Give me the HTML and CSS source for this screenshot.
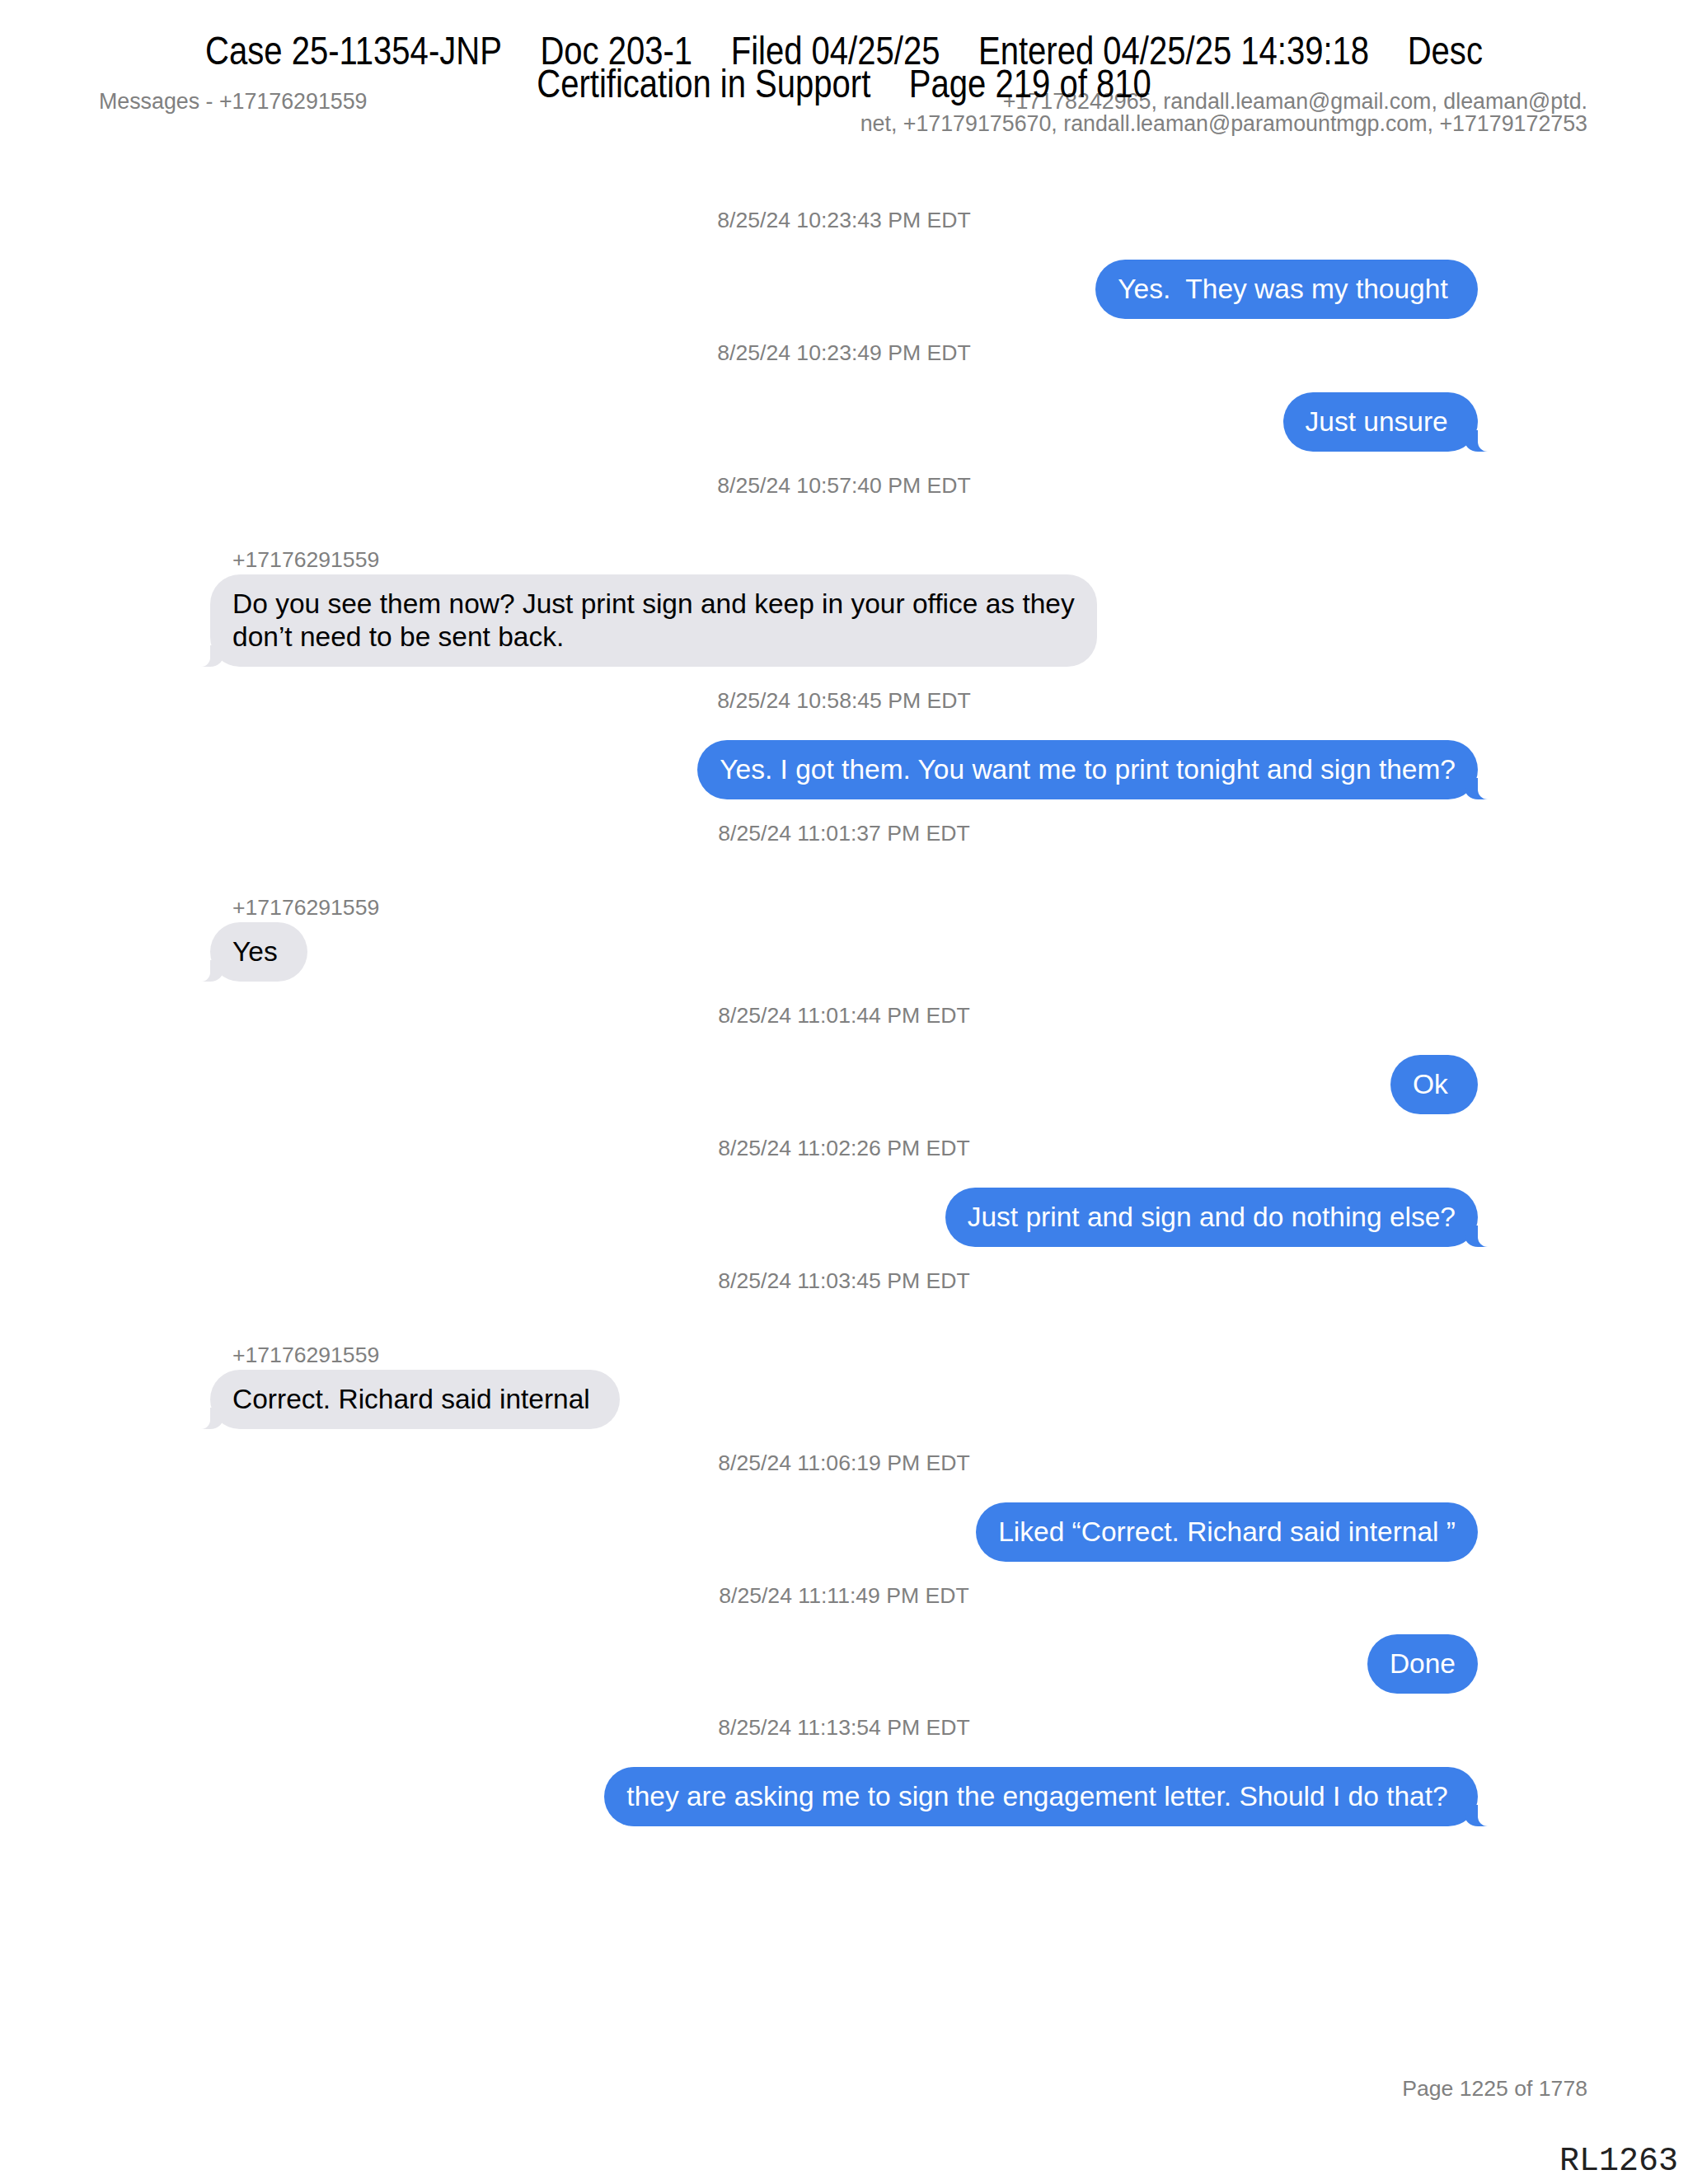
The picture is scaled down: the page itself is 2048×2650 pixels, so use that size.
FILE: index.html
```html
<!DOCTYPE html>
<html lang="en">
<head>
    <meta charset="UTF-8">
    <meta name="viewport" content="width=device-width, initial-scale=1.0">
    <title>Messages - +17176291559</title>
    <link rel="stylesheet" href="styles.css">
</head>
<body>
<div class="page">

    <!-- court filing stamp printed over the export -->
    <div class="stamp">
        <div class="stamp-line"><span>Case 25-11354-JNP</span><span>Doc 203-1</span><span>Filed 04/25/25</span><span>Entered 04/25/25 14:39:18</span><span>Desc</span></div>
        <div class="stamp-line"><span>Certification in Support</span><span>Page 219 of 810</span></div>
    </div>

    <header class="export-head">
        <div class="title">Messages - +17176291559</div>
        <div class="recipients">+17178242965, randall.leaman@gmail.com, dleaman@ptd.<br>net, +17179175670, randall.leaman@paramountmgp.com, +17179172753</div>
    </header>

    <main class="thread">
        <div class="time">8/25/24 10:23:43 PM EDT</div>
        <div class="msg sent">Yes.  They was my thought </div>

        <div class="time">8/25/24 10:23:49 PM EDT</div>
        <div class="msg sent tail">Just unsure </div>

        <div class="time">8/25/24 10:57:40 PM EDT</div>
        <div class="sender">+17176291559</div>
        <div class="msg received tail">Do you see them now? Just print sign and keep in your office as they<br>don’t need to be sent back.</div>

        <div class="time">8/25/24 10:58:45 PM EDT</div>
        <div class="msg sent tail">Yes. I got them. You want me to print tonight and sign them?</div>

        <div class="time">8/25/24 11:01:37 PM EDT</div>
        <div class="sender">+17176291559</div>
        <div class="msg received tail">Yes </div>

        <div class="time">8/25/24 11:01:44 PM EDT</div>
        <div class="msg sent">Ok </div>

        <div class="time">8/25/24 11:02:26 PM EDT</div>
        <div class="msg sent tail">Just print and sign and do nothing else?</div>

        <div class="time">8/25/24 11:03:45 PM EDT</div>
        <div class="sender">+17176291559</div>
        <div class="msg received tail">Correct. Richard said internal </div>

        <div class="time">8/25/24 11:06:19 PM EDT</div>
        <div class="msg sent">Liked “Correct. Richard said internal ”</div>

        <div class="time">8/25/24 11:11:49 PM EDT</div>
        <div class="msg sent">Done</div>

        <div class="time">8/25/24 11:13:54 PM EDT</div>
        <div class="msg sent tail">they are asking me to sign the engagement letter. Should I do that? </div>
    </main>

    <footer class="foot">
        <div class="page-num">Page 1225 of 1778</div>
        <div class="bates">RL1263</div>
    </footer>

</div>
</body>
</html>
```

FILE: styles.css
```css
* {
    margin: 0;
    padding: 0;
    box-sizing: border-box;
}
body {
    background-color: #fff;
    font-family: "Liberation Sans", Arial, sans-serif;
}
.page {
    position: relative;
    min-height: 2650px;
    display: flex;
    flex-direction: column;
    padding: 110px 122px 7px 120px;
}

/* filing stamp sits on top of the page, narrow face */
.stamp {
    position: absolute;
    top: 41px;
    left: 0;
    right: 0;
    text-align: center;
    font-family: "Liberation Sans", Arial, sans-serif;
    font-size: 49px;
    line-height: 40px;
    color: #000;
    z-index: 2;
}
.stamp-line {
    transform: scaleX(0.817); /* no narrow font installed */
    white-space: nowrap;
}
.stamp-line span + span {
    margin-left: 57px;
}

.export-head {
    display: flex;
    justify-content: space-between;
    font-size: 26.8px;
    line-height: 27px;
    color: #808080;
}
.recipients {
    text-align: right;
}

.thread {
    display: flex;
    flex-direction: column;
    margin-top: 62px;
    padding: 0 133px 0 135px;
}
.time {
    align-self: center;
    font-size: 26.6px;
    line-height: 30px;
    color: #808080;
    margin: 26px 0 32.8px;
}
.sender {
    align-self: flex-start;
    font-size: 26.6px;
    line-height: 30px;
    color: #808080;
    margin: 27.5px 0 3px 27px;
}
.msg {
    position: relative;
    max-width: 1080px;
    padding: 16px 27px;
    border-radius: 36px;
    font-size: 33.5px;
    line-height: 40px;
    white-space: break-spaces;
}
.sent {
    align-self: flex-end;
    background-color: #3d80ea;
    color: #fff;
}
.received {
    align-self: flex-start;
    background-color: #e5e5ea;
    color: #000;
}

/* bubble tails */
.tail::before,
.tail::after {
    content: "";
    position: absolute;
    bottom: 0;
    height: 26px;
}
.sent.tail::before {
    right: -12px;
    width: 28px;
    background-color: #3d80ea;
    border-bottom-left-radius: 16px 14px;
}
.sent.tail::after {
    right: -12px;
    width: 12px;
    background-color: #fff;
    border-bottom-left-radius: 12px;
}
.received.tail::before {
    left: -11px;
    width: 27px;
    background-color: #e5e5ea;
    border-bottom-right-radius: 16px 14px;
}
.received.tail::after {
    left: -11px;
    width: 11px;
    background-color: #fff;
    border-bottom-right-radius: 11px;
}

.foot {
    margin-top: auto;
    text-align: right;
}
.page-num {
    font-size: 26.6px;
    line-height: 30px;
    color: #808080;
}
.bates {
    font-family: "Liberation Mono", "Courier New", monospace;
    font-size: 40px;
    line-height: 40px;
    margin-top: 54px;
    margin-right: -110px;
    color: #222;
}
```
